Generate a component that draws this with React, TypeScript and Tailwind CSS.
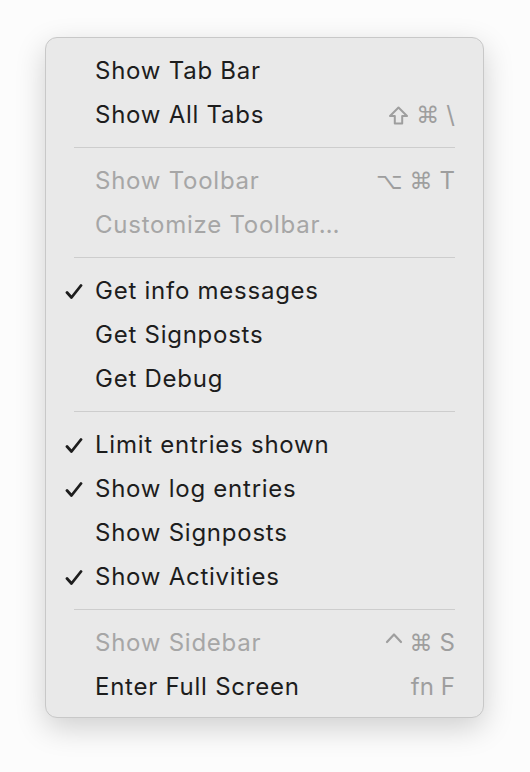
import React from 'react';

type Item = {
  label: string;
  checked?: boolean;
  disabled?: boolean;
  shortcut?: string[];
};

const groups: Item[][] = [
  [
    { label: 'Show Tab Bar' },
    { label: 'Show All Tabs', shortcut: ['⇧', '⌘', '\\'] },
  ],
  [
    { label: 'Show Toolbar', disabled: true, shortcut: ['⌥', '⌘', 'T'] },
    { label: 'Customize Toolbar…', disabled: true },
  ],
  [
    { label: 'Get info messages', checked: true },
    { label: 'Get Signposts' },
    { label: 'Get Debug' },
  ],
  [
    { label: 'Limit entries shown', checked: true },
    { label: 'Show log entries', checked: true },
    { label: 'Show Signposts' },
    { label: 'Show Activities', checked: true },
  ],
  [
    { label: 'Show Sidebar', disabled: true, shortcut: ['^', '⌘', 'S'] },
    { label: 'Enter Full Screen', shortcut: ['fn', 'F'] },
  ],
];

const Check = () => (
  <svg width="18" height="16" viewBox="0 0 18 16" className="text-[#1d1d1d]">
    <path d="M2 8.5 L6.5 13.5 L16 1.5" fill="none" stroke="currentColor" strokeWidth="2.8" strokeLinecap="round" strokeLinejoin="round" />
  </svg>
);

// outlined shift arrow, as macOS draws it
const ShiftKey = () => (
  <svg width="21" height="19" viewBox="0 0 21 19">
    <path
      d="M10.5 1.5 L19 10 L14.2 10 L14.2 17.5 L6.8 17.5 L6.8 10 L2 10 Z"
      fill="none"
      stroke="currentColor"
      strokeWidth="2"
      strokeLinejoin="round"
    />
  </svg>
);

// control caret, a plain chevron
const CtrlKey = () => (
  <svg width="18" height="12" viewBox="0 0 18 12" className="-translate-y-[5px]">
    <path d="M2 10 L9 2.5 L16 10" fill="none" stroke="currentColor" strokeWidth="2.2" strokeLinecap="round" strokeLinejoin="round" />
  </svg>
);

const Key = ({ k }: { k: string }) => {
  if (k === '⇧') return <ShiftKey />;
  if (k === '^') return <CtrlKey />;
  if (k === '⌘' || k === '⌥')
    return <span className="font-['DejaVu_Sans',sans-serif] text-[23px]">{k}</span>;
  return <span>{k}</span>;
};

const MenuRow = ({ item }: { item: Item }) => (
  <div className="relative flex items-center h-[44px] pl-[49px] pr-[28px]">
    {item.checked && (
      <span className="absolute left-[19px] top-[15px]">
        <Check />
      </span>
    )}
    <span
      className={`flex-1 text-[24px] leading-none tracking-[0.75px] ${
        item.disabled ? 'text-[#a6a6a6]' : 'text-[#1d1d1d]'
      }`}
    >
      {item.label}
    </span>
    {item.shortcut && (
      <span className="flex items-center gap-[7px] text-[24px] leading-none text-[#9e9e9e]">
        {item.shortcut.map((k, i) => (
          <Key key={i} k={k} />
        ))}
      </span>
    )}
  </div>
);

export default function App() {
  return (
    <div className="w-[530px] h-[772px] bg-[#fcfcfc] pt-[37px] pl-[45px] font-['Inter',sans-serif]">
      <div className="w-[439px] rounded-[12px] border border-[#c8c8c8] bg-[#e9e9e9] pt-[11px] pb-[8px] shadow-[0_10px_30px_rgba(0,0,0,0.18)]">
        {groups.map((group, gi) => (
          <div key={gi}>
            {gi > 0 && (
              <div className="h-[22px] pt-[10px] px-[28px]">
                <div className="h-[1px] bg-[#cdcdcd]" />
              </div>
            )}
            {group.map((item) => (
              <MenuRow key={item.label} item={item} />
            ))}
          </div>
        ))}
      </div>
    </div>
  );
}
